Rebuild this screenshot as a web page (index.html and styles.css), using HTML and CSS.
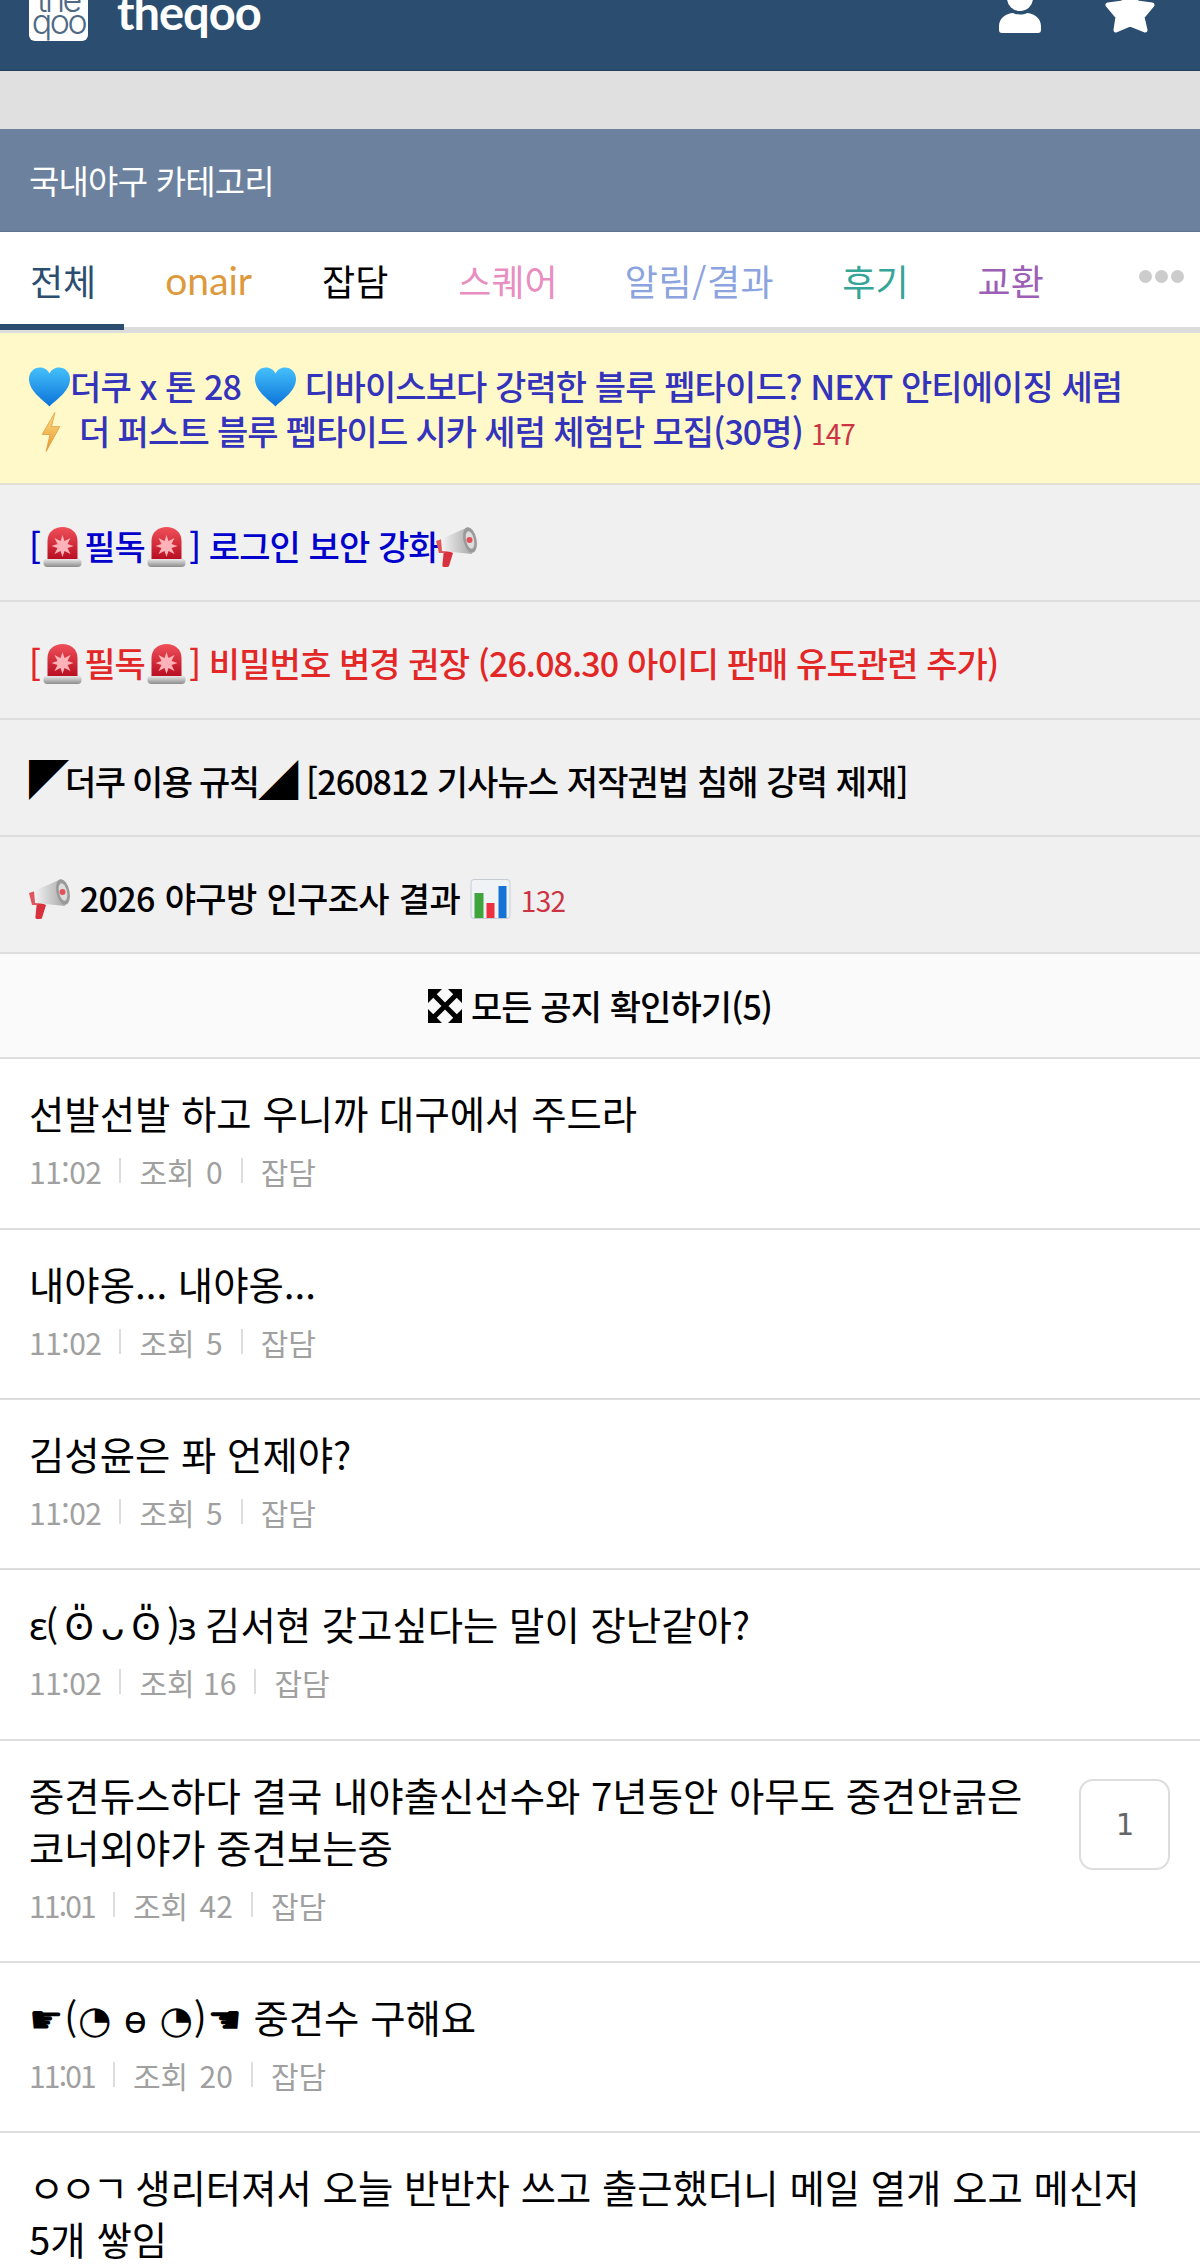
FILE: index.html
```html
<!DOCTYPE html>
<html lang="ko">
<head>
<meta charset="utf-8">
<title>theqoo 국내야구 카테고리</title>
<link rel="stylesheet" href="styles.css">
</head>
<body>
<svg class="defs" aria-hidden="true">
  <defs>
    <linearGradient id="gHeart" x1="0" y1="0" x2="0" y2="1"><stop offset="0" stop-color="#45c0fb"/><stop offset="1" stop-color="#0a72d8"/></linearGradient>
    <linearGradient id="gBolt" x1="0" y1="0" x2="0" y2="1"><stop offset="0" stop-color="#fde08a"/><stop offset="1" stop-color="#e8952c"/></linearGradient>
    <linearGradient id="gDome" x1="0" y1="0" x2="0" y2="1"><stop offset="0" stop-color="#f0505a"/><stop offset="1" stop-color="#b80f22"/></linearGradient>
    <linearGradient id="gBase" x1="0" y1="0" x2="0" y2="1"><stop offset="0" stop-color="#e8e8e8"/><stop offset="1" stop-color="#8c8c8c"/></linearGradient>
    <linearGradient id="gHorn" x1="0" y1="0" x2="1" y2="0"><stop offset="0" stop-color="#f4f4f4"/><stop offset="1" stop-color="#a8a8a8"/></linearGradient>
    <symbol id="i-heart" viewBox="0 0 41 39"><path fill="url(#gHeart)" d="M20.5 39C15 33 0 24 0 11.500 0 4.500 5 0 11 0c4.500 0 7.800 2.500 9.500 6C22.200 2.500 25.500 0 30 0c6 0 11 4.500 11 11.500C41 24 26 33 20.500 39Z"/></symbol>
    <symbol id="i-bolt" viewBox="0 0 20 41"><path fill="url(#gBolt)" stroke="#dd9a3c" stroke-width=".8" d="M14 .5 1 23h8L5 40.500 19 15h-8.500Z"/></symbol>
    <symbol id="i-siren" viewBox="0 0 38 40">
      <path fill="url(#gBase)" d="M2 32h34q2 0 2 3v1q0 4-4 4H4q-4 0-4-4v-1q0-3 2-3Z"/>
      <path fill="url(#gDome)" d="M4 32V14C4 5 11 0 19 0s15 5 15 14v18Z"/>
      <path fill="#ffb3b8" d="m19 8 2 6 6-3-3 6 6 2-6 2 3 6-6-3-2 6-2-6-6 3 3-6-6-2 6-2-3-6 6 3Z"/>
    </symbol>
    <symbol id="i-horn" viewBox="0 0 41 40">
      <path fill="#d8303c" d="m8 22 9 4-4 13q-.5 1-2 1H8q-2 0-1.600-2Z"/>
      <path fill="#e0545e" d="M0 14 6 12 9 26 3 26Z"/>
      <path fill="url(#gHorn)" d="M5 12 30 1l6 26-30-3Z"/>
      <ellipse cx="34" cy="13" rx="6.500" ry="13" fill="#9a9a9a" transform="rotate(-12 34 13)"/>
      <ellipse cx="34" cy="13" rx="4" ry="9" fill="#dcdcdc" transform="rotate(-12 34 13)"/>
      <circle cx="33.500" cy="13" r="3" fill="#e2505a"/>
    </symbol>
    <symbol id="i-chart" viewBox="0 0 40 40">
      <rect x=".5" y=".5" width="39" height="39" rx="3" fill="#f0f3f6" stroke="#c6ccd4"/>
      <rect x="4" y="14" width="9" height="25" fill="#3fa53a"/>
      <rect x="16" y="24" width="8" height="15" fill="#ec3040"/>
      <rect x="28" y="7" width="8" height="32" fill="#1673d6"/>
    </symbol>
    <symbol id="i-expand" viewBox="0 0 34 34">
      <path fill="#000" d="M0 0h14L9.500 4.500 4.500 9.500 0 14ZM34 0v14l-4.500-4.500-5-5L20 0ZM0 34V20l4.500 4.500 5 5L14 34ZM34 34H20l4.500-4.500 5-5L34 20Z"/>
      <path stroke="#000" stroke-width="5" d="M5 5l24 24M29 5 5 29"/>
    </symbol>
  </defs>
</svg>
<div class="page">
  <header class="topbar">
    <div class="logo"><span class="logo-line">the</span><span class="logo-line">qoo</span></div>
    <div class="brand">theqoo</div>
    <div class="top-icons">
      <svg class="ico-person" viewBox="0 0 44 44"><circle cx="22" cy="8" r="13" fill="#fff"/><path fill="#fff" d="M1 36C1 28 9 23 15 23c4 2 10 2 14 0 6 0 14 5 14 13v4q0 3-3 3H4q-3 0-3-3Z"/></svg>
      <svg class="ico-star" viewBox="0 0 50 46"><path fill="#fff" stroke="#fff" stroke-width="5" stroke-linejoin="round" d="M25 3 32 15 47 17 37 29 40 42 25 36 11 42 13 29 3 17 18 15Z"/></svg>
    </div>
  </header>
  <div class="strip"></div>
  <div class="catbar">국내야구 카테고리</div>
  <nav class="tabs">
    <span class="tab tab-first">전체</span>
    <span class="tab t-onair">onair</span>
    <span class="tab t-black">잡담</span>
    <span class="tab t-pink">스퀘어</span>
    <span class="tab t-blue">알림/결과</span>
    <span class="tab t-teal">후기</span>
    <span class="tab t-purple">교환</span>
    <span class="dots"><i></i><i></i><i></i></span>
  </nav>
  <section class="notices">
    <div class="notice notice-ad">
      <svg class="emo"><use href="#i-heart"/></svg>더쿠 x 톤 28 <svg class="emo emo-heart2"><use href="#i-heart"/></svg> 디바이스보다 강력한 블루 펩타이드? NEXT 안티에이징 세럼<br>
      <span class="tight"><svg class="emo emo-bolt"><use href="#i-bolt"/></svg> 더 퍼스트 블루 펩타이드 시카 세럼 체험단 모집(30명) <span class="count">147</span></span>
    </div>
    <div class="notice c-blue">[<svg class="emo emo-siren"><use href="#i-siren"/></svg>필독<svg class="emo emo-siren"><use href="#i-siren"/></svg>] 로그인 보안 강화<svg class="emo emo-back"><use href="#i-horn"/></svg></div>
    <div class="notice c-red">[<svg class="emo emo-siren"><use href="#i-siren"/></svg>필독<svg class="emo emo-siren"><use href="#i-siren"/></svg>] 비밀번호 변경 권장 (26.08.30 아이디 판매 유도관련 추가)</div>
    <div class="notice"><span class="tri tri-a">◤</span><span class="rule">더쿠 이용 규칙</span><span class="tri">◢</span> [260812 기사뉴스 저작권법 침해 강력 제재]</div>
    <div class="notice notice-survey"><svg class="emo"><use href="#i-horn"/></svg> 2026 야구방 인구조사 결과 <svg class="emo"><use href="#i-chart"/></svg> <span class="count">132</span></div>
    <div class="all-notices"><svg class="expand"><use href="#i-expand"/></svg> 모든 공지 확인하기(5)</div>
  </section>
  <section class="list">
    <article class="row">
      <div class="row-main"><h3 class="title">선발선발 하고 우니까 대구에서 주드라</h3>
      <p class="meta"><span>11:02</span><span>조회 0</span><span>잡담</span></p></div>
    </article>
    <article class="row">
      <div class="row-main"><h3 class="title">내야옹... 내야옹...</h3>
      <p class="meta"><span>11:02</span><span>조회 5</span><span>잡담</span></p></div>
    </article>
    <article class="row">
      <div class="row-main"><h3 class="title">김성윤은 퐈 언제야?</h3>
      <p class="meta"><span>11:02</span><span>조회 5</span><span>잡담</span></p></div>
    </article>
    <article class="row">
      <div class="row-main"><h3 class="title"><span class="kao-bunny">ɛ( ʘ̎ ᴗ ʘ̎ )ɜ</span> 김서현 갖고싶다는 말이 장난같아?</h3>
      <p class="meta meta-wide-num"><span>11:02</span><span>조회 16</span><span>잡담</span></p></div>
    </article>
    <article class="row">
      <div class="row-main"><h3 class="title">중견듀스하다 결국 내야출신선수와 7년동안 아무도 중견안긁은 코너외야가 중견보는중</h3>
      <p class="meta meta-0101"><span>11:01</span><span>조회 42</span><span>잡담</span></p></div>
      <div class="reply">1</div>
    </article>
    <article class="row">
      <div class="row-main"><h3 class="title"><span class="kao">☛(◔ ө ◔)☚</span> 중견수 구해요</h3>
      <p class="meta meta-0101"><span>11:01</span><span>조회 20</span><span>잡담</span></p></div>
    </article>
    <article class="row">
      <div class="row-main"><h3 class="title"><span class="jamo">ㅇㅇㄱ</span> 생리터져서 오늘 반반차 쓰고 출근했더니 메일 열개 오고 메신저<br>5개 쌓임</h3></div>
    </article>
  </section>
</div>
</body>
</html>
```
FILE: styles.css
```css
* { box-sizing: border-box; }
html, body { margin: 0; padding: 0; background: #fff; }
body { font-family: "Noto Sans CJK KR", "Noto Sans", "DejaVu Sans", sans-serif; color: #000; }
.defs { display: block; width: 0; height: 0; }
.page { width: 1200px; height: 2267px; overflow: hidden; }

.topbar { display: flex; height: 71px; background: #2b4e70; border-bottom: 1px solid #243f5b; overflow: hidden; padding-left: 29px; }
.logo { flex: none; width: 59px; height: 62px; margin-top: -21px; background: #fff; border-radius: 6px; display: flex; flex-direction: column; align-items: center; color: #4f6a85; font-family: "Inter", sans-serif; font-weight: 300; font-size: 34px; line-height: 22px; padding-top: 10px; }
.logo-line { display: block; letter-spacing: -2.5px; }
.brand { margin-left: 29px; margin-top: -18px; font-family: "Lato", sans-serif; font-weight: 700; font-size: 47px; letter-spacing: -1px; line-height: 60px; color: #fff; }
.top-icons { margin-left: auto; display: flex; align-items: flex-start; padding-right: 45px; }
.ico-person { width: 44px; height: 44px; margin-top: -10px; }
.ico-star { width: 50px; height: 46px; margin-top: -12px; margin-left: 63px; }

.strip { height: 58px; background: #e0e0e0; }
.catbar { height: 103px; background: #6b819d; border-bottom: 1px solid #5f7390; color: #fff; font-size: 33px; letter-spacing: -.8px; line-height: 102px; padding-left: 29px; }

.tabs { display: flex; align-items: center; height: 101px; padding-bottom: 6px; background: #fff; border-bottom: 6px solid #dcdcdc; font-size: 36px; white-space: nowrap; }
.tab { margin-right: 70px; height: 95px; padding-top: 8px; line-height: 87px; }
.tab-first { margin-right: 41px; padding: 8px 28px 0 30px; color: #2b4e70; box-shadow: 0 6px 0 #2b4e70; }
.t-onair { color: #dd9a3c; font-family: "Lato", sans-serif; font-size: 39px; }
.t-black { color: #000; }
.t-pink { color: #e88ec0; margin-right: 67px; }
.t-blue { color: #8ba3de; letter-spacing: .6px; margin-right: 68px; }
.t-teal { color: #35a598; margin-right: 69px; }
.t-purple { color: #9c5fb5; }
.dots { display: flex; gap: 3px; margin-left: auto; padding-right: 16px; }
.dots i { display: block; width: 13px; height: 13px; border-radius: 50%; background: #ccc; }

.notice { background: #f0f0f0; border-bottom: 2px solid #ddd; height: 117.300px; padding: 4px 20px 0 29px; font-size: 34px; font-weight: 500; letter-spacing: -.9px; line-height: 114px; white-space: nowrap; }
.notice-ad { height: 152px; padding-top: 30px; line-height: 45px; background: #fff8c8; color: #3333bb; border-bottom-color: #e2e0d2; }
.notice-survey { letter-spacing: -.65px; word-spacing: 1px; }
.tight { word-spacing: -.5px; }
.c-blue { color: #0000cc; }
.c-red { color: #e32626; }
.count { font-size: 28px; color: #cc3344; font-weight: 400; }
.tri { font-size: 40px; line-height: 1; }
.tri-a { margin-right: -3px; }
.rule { letter-spacing: -1.700px; }
.emo { width: 41px; height: 40px; vertical-align: -7px; }
.emo-bolt { width: 20px; margin: 0 10px 0 12px; }
.emo-heart2 { margin-left: 5px; }
.emo-siren { margin: 0 1.500px; }
.emo-back { margin-left: -3px; }
.all-notices { height: 105px; background: #fafafa; border-bottom: 2px solid #ddd; display: flex; align-items: center; justify-content: center; gap: 9px; font-size: 34px; font-weight: 500; letter-spacing: -.9px; }
.expand { width: 34px; height: 34px; flex: none; }

.row { display: flex; align-items: flex-start; gap: 40px; padding: 27px 30px 0 29px; height: 170.400px; border-bottom: 2px solid #ddd; }
.row:nth-child(5) { height: 222px; }
.row-main { flex: 1; min-width: 0; }
.title { margin: 0; font-size: 38.400px; font-weight: 400; line-height: 52px; color: #000; }
.kao { letter-spacing: .8px; }
.kao-bunny { letter-spacing: -2.300px; }
.jamo { letter-spacing: -3.500px; }
.meta { margin: 10px 0 0; display: flex; align-items: center; font-size: 30px; line-height: 46px; color: #a0a0a0; word-spacing: 3px; }
.meta span:first-child { letter-spacing: -.5px; }
.meta-wide-num { word-spacing: 0; }
.meta-0101 span:first-child { letter-spacing: -1.800px; }
.meta span + span { margin-left: 18px; padding-left: 20px; position: relative; }
.meta span + span::before { content: ""; position: absolute; left: 0; top: 10px; width: 2px; height: 25px; background: #ddd; }
.reply { flex: none; width: 91px; height: 91px; margin-top: 11px; border: 2px solid #ddd; border-radius: 14px; display: flex; align-items: center; justify-content: center; font-family: "DejaVu Sans Mono", monospace; font-size: 30px; color: #666; }
```
